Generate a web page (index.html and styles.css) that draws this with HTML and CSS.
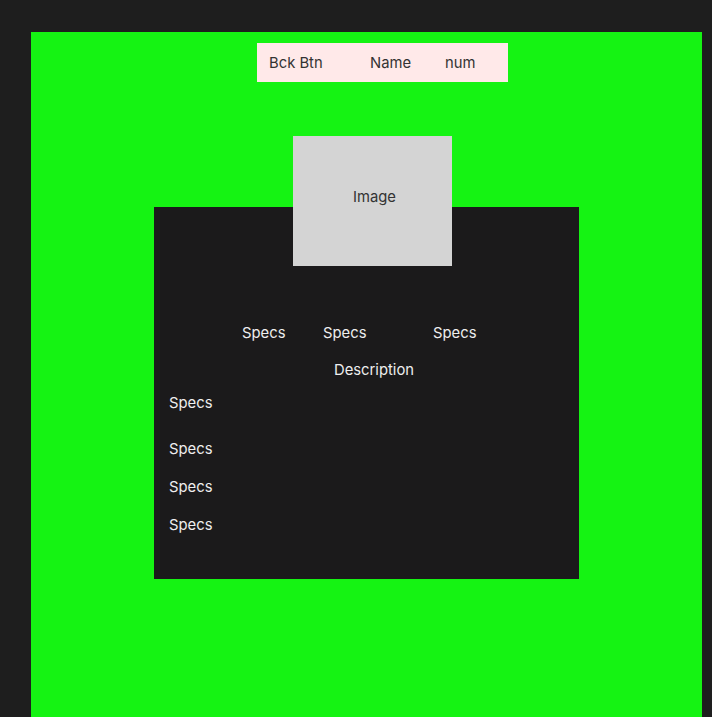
FILE: index.html
```html
<!DOCTYPE html>
<html>
<head>
	<title>Product</title>
	<link rel="stylesheet" href="styles.css">
</head>
<body>
	<div class="frame">
		<div class="topbar">
			<span>Bck Btn</span>
			<span>Name</span>
			<span>num</span>
		</div>

		<div class="panel">
			<div class="pic">Image</div>
			<div class="specRow">
				<span>Specs</span>
				<span>Specs</span>
				<span>Specs</span>
			</div>
			<div class="desc">Description</div>
			<div class="specList">
				<div class="s1">Specs</div>
				<div class="s2">Specs</div>
				<div class="s3">Specs</div>
				<div class="s4">Specs</div>
			</div>
		</div>
	</div>
</body>
</html>
```

FILE: styles.css
```css
body{
	margin: 0;
	background: #1e1e1e;
	padding: 32px 0 0 31px;
	height: 717px;
	box-sizing: border-box;
	overflow: hidden;
	font-family: Inter, "Liberation Sans", sans-serif;
	font-size: 14.8px;
	line-height: 17px;
}
.frame{
	width: 671px;
	height: 720px;
	background: #15f313;
	padding-top: 11px;
	box-sizing: border-box;
}
.topbar{
	margin-left: 226px;
	width: 251px;
	height: 39px;
	background: #ffe9e9;
	color: #333;
	padding: 2px 0 0 12px;
	box-sizing: border-box;
	display: grid;
	grid-template-columns: 101px 75px auto;
	align-items: center;
}
.panel{
	position: relative;
	margin: 125px 0 0 123px;
	width: 425px;
	height: 372px;
	background: #1b1a1b;
	color: #eeeeee;
	padding-top: 118px;
	box-sizing: border-box;
}
.pic{
	position: absolute;
	top: -71px;
	left: 139px;
	width: 159px;
	height: 130px;
	background: #d4d4d4;
	color: #333;
	text-align: center;
	padding: 53px 0 0 4px;
	box-sizing: border-box;
}
.specRow{
	display: grid;
	grid-template-columns: 81px 110px auto;
	padding-left: 88px;
}
.desc{
	margin-top: 20px;
	padding-left: 180px;
}
.specList{
	padding-left: 15px;
	margin-top: 16px;
}
.s2{ margin-top: 29px; }
.s3, .s4{ margin-top: 21px; }
```
